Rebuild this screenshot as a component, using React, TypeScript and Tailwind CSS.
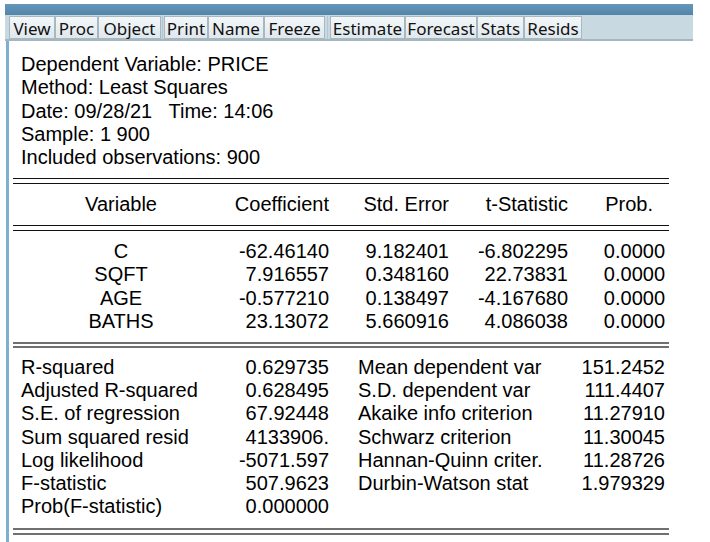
import React from "react";

const buttons: { label: string; w: string; gapBefore?: string }[] = [
  { label: "View", w: "w-[46px]" },
  { label: "Proc", w: "w-[43px]" },
  { label: "Object", w: "w-[63px]" },
  { label: "Print", w: "w-[44px]", gapBefore: "sep3" },
  { label: "Name", w: "w-[56px]" },
  { label: "Freeze", w: "w-[61px]" },
  { label: "Estimate", w: "w-[75px]", gapBefore: "sep5" },
  { label: "Forecast", w: "w-[72px]" },
  { label: "Stats", w: "w-[47px]" },
  { label: "Resids", w: "w-[58px]" },
];

const coefRows = [
  ["C", "-62.46140", "9.182401", "-6.802295", "0.0000"],
  ["SQFT", "7.916557", "0.348160", "22.73831", "0.0000"],
  ["AGE", "-0.577210", "0.138497", "-4.167680", "0.0000"],
  ["BATHS", "23.13072", "5.660916", "4.086038", "0.0000"],
];

const statRows = [
  ["R-squared", "0.629735", "Mean dependent var", "151.2452"],
  ["Adjusted R-squared", "0.628495", "S.D. dependent var", "111.4407"],
  ["S.E. of regression", "67.92448", "Akaike info criterion", "11.27910"],
  ["Sum squared resid", "4133906.", "Schwarz criterion", "11.30045"],
  ["Log likelihood", "-5071.597", "Hannan-Quinn criter.", "11.28726"],
  ["F-statistic", "507.9623", "Durbin-Watson stat", "1.979329"],
  ["Prob(F-statistic)", "0.000000", "", ""],
];

function ThinDouble() {
  return (
    <div className="flex flex-col gap-[4px]">
      <div className="h-[1px] bg-[#111]" />
      <div className="h-[1px] bg-[#111]" />
    </div>
  );
}

function ThickDouble({ gap }: { gap: "g2" | "g3" }) {
  return (
    <div className={gap === "g2" ? "flex flex-col gap-[2px]" : "flex flex-col gap-[3px]"}>
      <div className="h-[2px] bg-[#707070]" />
      <div className="h-[2px] bg-[#707070]" />
    </div>
  );
}

export default function App() {
  return (
    <div
      className="w-[710px] h-[542px] bg-white overflow-hidden pt-[4px] pl-[5px]"
      style={{ fontFamily: '"Liberation Sans", Arial, sans-serif' }}
    >
      <div className="w-[688px] h-[538px] flex flex-col">
        {/* title strip */}
        <div className="h-[11px] bg-gradient-to-b from-[#6597bb] to-[#5285a9]" />
        {/* toolbar */}
        <div className="h-[26px] bg-[#c8d9e2] border-b-[2px] border-[#a4b6c0] flex items-start pt-[1px] pl-[4px]">
          {buttons.map((b) => (
            <React.Fragment key={b.label}>
              {b.gapBefore === "sep3" && (
                <div className="w-[3px] shrink-0 h-[23px] flex justify-center">
                  <div className="w-[1px] h-full bg-[#b5c6cf]" />
                </div>
              )}
              {b.gapBefore === "sep5" && (
                <div className="w-[5px] shrink-0 h-[23px] flex justify-center">
                  <div className="w-[1px] h-full bg-[#b5c6cf]" />
                </div>
              )}
              <div
                className={`${b.w} shrink-0 h-[23px] flex items-center justify-center border border-[#a9b8c0] bg-gradient-to-b from-[#f3f7f9] to-[#dfe8ed] text-[17px] leading-none text-[#111]`}
                style={{ fontFamily: '"Noto Sans", "Open Sans", sans-serif' }}
              >
                <span className="pt-[2px]">{b.label}</span>
              </div>
            </React.Fragment>
          ))}
        </div>
        {/* content */}
        <div className="flex-1 flex">
          <div className="w-[1px] bg-white" />
          <div className="w-[3px] bg-[#7fb0cf]" />
          <div className="flex-1 pl-[4px] text-[20px] text-black">
            <div className="pl-[8px] pt-[12px] leading-[23.3px]">
              <div>Dependent Variable: PRICE</div>
              <div>Method: Least Squares</div>
              <div className="whitespace-pre">Date: 09/28/21   Time: 14:06</div>
              <div>Sample: 1 900</div>
              <div>Included observations: 900</div>
            </div>

            <div className="w-[656px] mt-[8.5px]">
              <ThinDouble />
              <div className="h-[41px] grid grid-cols-[216px_100px_120px_119px_97px] items-center leading-[23.3px]">
                <div className="text-center">Variable</div>
                <div className="text-right">Coefficient</div>
                <div className="text-right">Std. Error</div>
                <div className="text-right">t-Statistic</div>
                <div className="text-right pr-[12px]">Prob.</div>
              </div>
              <ThinDouble />
              <div className="pt-[9px] pb-[8.5px] leading-[23.3px]">
                {coefRows.map((r) => (
                  <div key={r[0]} className="grid grid-cols-[216px_100px_120px_119px_97px]">
                    <div className="text-center">{r[0]}</div>
                    <div className="text-right">{r[1]}</div>
                    <div className="text-right">{r[2]}</div>
                    <div className="text-right">{r[3]}</div>
                    <div className="text-right">{r[4]}</div>
                  </div>
                ))}
              </div>
              <ThickDouble gap="g2" />
              <div className="pt-[8px] pb-[9px] leading-[23.3px] pl-[8px] pr-[4px]">
                {statRows.map((r) => (
                  <div key={r[0]} className="grid grid-cols-[208px_100px_1fr_auto]">
                    <div className="whitespace-nowrap">{r[0]}</div>
                    <div className="text-right">{r[1]}</div>
                    <div className="pl-[29px] whitespace-nowrap">{r[2]}</div>
                    <div className="text-right">{r[3]}</div>
                  </div>
                ))}
              </div>
              <ThickDouble gap="g3" />
            </div>
          </div>
        </div>
      </div>
    </div>
  );
}
